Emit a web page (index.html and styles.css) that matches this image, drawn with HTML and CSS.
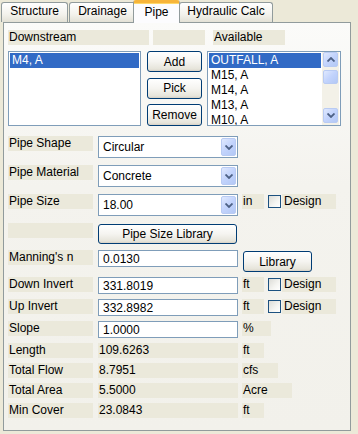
FILE: index.html
```html
<!DOCTYPE html>
<html lang="en">

<head>
    <meta charset="UTF-8" />
    <meta name="viewport" content="width=device-width, initial-scale=1.0" />
    <title>Pipe</title>
    <link rel="stylesheet" href="styles.css">
</head>

<body>
    <!-- tab strip -->
    <div class="tabs">
        <div class="tab t-structure">Structure</div>
        <div class="tab t-drainage">Drainage</div>
        <div class="tab active t-pipe">Pipe</div>
        <div class="tab t-hydraulic">Hydraulic Calc</div>
    </div>

    <div class="panel">
        <!-- downstream / available pickers -->
        <div class="heads">
            <span class="lbl head-down">Downstream</span>
            <span class="lbl head-blank"></span>
            <span class="lbl head-avail">Available</span>
        </div>
        <div class="lists">
            <div class="listbox list-down">
                <div class="item sel">M4, A</div>
            </div>
            <div class="btn-col">
                <button class="btn">Add</button>
                <button class="btn">Pick</button>
                <button class="btn">Remove</button>
            </div>
            <div class="listbox list-avail">
                <div class="items">
                    <div class="item sel">OUTFALL, A</div>
                    <div class="item">M15, A</div>
                    <div class="item">M14, A</div>
                    <div class="item">M13, A</div>
                    <div class="item">M10, A</div>
                </div>
                <div class="scrollbar">
                    <span class="sb-btn">
                        <svg width="8" height="5" viewBox="0 0 8 5"><polyline points="0.5,4.5 4,1 7.5,4.5" fill="none" stroke="#4d6185" stroke-width="1.8"/></svg>
                    </span>
                    <span class="sb-thumb"></span>
                    <span class="sb-btn sb-down">
                        <svg width="8" height="5" viewBox="0 0 8 5"><polyline points="0.5,0.5 4,4 7.5,0.5" fill="none" stroke="#4d6185" stroke-width="1.8"/></svg>
                    </span>
                </div>
            </div>
        </div>

        <!-- pipe properties -->
        <div class="row h29 first">
            <span class="lbl name">Pipe Shape</span>
            <div class="combo"><span class="combo-text">Circular</span>
                <span class="combo-btn"><svg width="8" height="5" viewBox="0 0 8 5"><polyline points="0.5,0.5 4,4 7.5,0.5" fill="none" stroke="#4d6185" stroke-width="1.8"/></svg></span>
            </div>
        </div>
        <div class="row h29">
            <span class="lbl name">Pipe Material</span>
            <div class="combo"><span class="combo-text">Concrete</span>
                <span class="combo-btn"><svg width="8" height="5" viewBox="0 0 8 5"><polyline points="0.5,0.5 4,4 7.5,0.5" fill="none" stroke="#4d6185" stroke-width="1.8"/></svg></span>
            </div>
        </div>
        <div class="row h29">
            <span class="lbl name">Pipe Size</span>
            <div class="combo"><span class="combo-text">18.00</span>
                <span class="combo-btn"><svg width="8" height="5" viewBox="0 0 8 5"><polyline points="0.5,0.5 4,4 7.5,0.5" fill="none" stroke="#4d6185" stroke-width="1.8"/></svg></span>
            </div>
            <span class="lbl unit">in</span>
            <span class="check"></span>
            <span class="lbl design">Design</span>
        </div>
        <div class="row h27">
            <span class="lbl name"></span>
            <button class="btn size-lib">Pipe Size Library</button>
        </div>
        <div class="row h27">
            <span class="lbl name">Manning's n</span>
            <span class="input">0.0130</span>
            <button class="btn lib">Library</button>
        </div>
        <div class="row h22">
            <span class="lbl name">Down Invert</span>
            <span class="input">331.8019</span>
            <span class="lbl unit">ft</span>
            <span class="check"></span>
            <span class="lbl design">Design</span>
        </div>
        <div class="row h22">
            <span class="lbl name">Up Invert</span>
            <span class="input">332.8982</span>
            <span class="lbl unit">ft</span>
            <span class="check"></span>
            <span class="lbl design">Design</span>
        </div>
        <div class="row h22">
            <span class="lbl name">Slope</span>
            <span class="input">1.0000</span>
            <span class="lbl unit pct">%</span>
        </div>
        <div class="row h20">
            <span class="lbl name">Length</span>
            <span class="lbl value">109.6263</span>
            <span class="lbl unit">ft</span>
        </div>
        <div class="row h20">
            <span class="lbl name">Total Flow</span>
            <span class="lbl value">8.7951</span>
            <span class="lbl unit cfs">cfs</span>
        </div>
        <div class="row h20">
            <span class="lbl name">Total Area</span>
            <span class="lbl value">5.5000</span>
            <span class="lbl unit acre">Acre</span>
        </div>
        <div class="row h20">
            <span class="lbl name">Min Cover</span>
            <span class="lbl value">23.0843</span>
            <span class="lbl unit">ft</span>
        </div>
    </div>
</body>

</html>
```

FILE: styles.css
```css
* {
    margin: 0;
    padding: 0;
    box-sizing: border-box;
}

body {
    background: #ece9d8;
    font: 12px "Liberation Sans", Arial, sans-serif;
    color: #000;
}

/* tabs */
.tabs {
    display: flex;
    align-items: flex-end;
    height: 22px;
}

.tab {
    height: 20px;
    padding-top: 1px;
    line-height: 15px;
    text-align: center;
    border: 1px solid #919b9c;
    border-bottom: none;
    border-radius: 3px 3px 0 0;
    background: linear-gradient(#ffffff, #f3f2ec 60%, #e3e1d6);
}

.t-structure {
    margin-left: 1px;
    width: 67px;
}

.t-drainage {
    margin-left: 1px;
    width: 67px;
}

.t-pipe {
    margin-left: -3px;
    width: 47px;
}

.t-hydraulic {
    margin-left: -1px;
    width: 94px;
}

.tab.active {
    position: relative;
    z-index: 1;
    height: 23px;
    margin-bottom: -1px;
    padding-top: 2px;
    background: #fcfcfe;
    border-top: 3px solid #ffc83c;
    box-shadow: inset 0 1px 0 #ffd86a;
    border-radius: 3px 3px 0 0;
    border-top-color: #f7b53a;
}

/* panel */
.panel {
    margin-left: 3px;
    width: 348px;
    height: 409px;
    border: 1px solid #919b9c;
    background: linear-gradient(#fbfbf9, #f4f3ee 40%, #f2f1eb);
    padding: 7px 0 0 4px;
}

.lbl {
    display: block;
    height: 15px;
    line-height: 15px;
    padding-left: 1px;
    background: #ebe9db;
    white-space: nowrap;
}

.heads {
    display: flex;
}

.head-down {
    width: 141px;
}

.head-blank {
    margin-left: 4px;
    width: 52px;
}

.head-avail {
    margin-left: 8px;
    width: 72px;
}

.lists {
    display: flex;
    margin-top: 6px;
    height: 75px;
}

.listbox {
    height: 75px;
    border: 1px solid #7f9db9;
    background: #fff;
}

.list-down {
    width: 133px;
    padding: 1px;
}

.item {
    height: 15px;
    line-height: 15px;
    padding-left: 2px;
    white-space: nowrap;
    overflow: hidden;
}

.item.sel {
    background: #316ac5;
    color: #fff;
}

.list-avail {
    margin-left: 5px;
    width: 134px;
    display: flex;
    overflow: hidden;
}

.items {
    width: 114px;
    padding: 1px;
}

.scrollbar {
    width: 17px;
    height: 73px;
    background: #f3f1e8;
    display: flex;
    flex-direction: column;
    align-items: center;
}

.sb-btn,
.sb-thumb,
.combo-btn {
    display: flex;
    align-items: center;
    justify-content: center;
    border: 1px solid #b9cbf3;
    border-radius: 2px;
    background: linear-gradient(135deg, #e0e9fe, #c2d3fc 50%, #b3c8f5);
}

.sb-btn {
    width: 15px;
    height: 15px;
}

.sb-thumb {
    margin-top: 3px;
    width: 15px;
    height: 14px;
}

.sb-down {
    margin-top: auto;
    margin-bottom: 2px;
}

/* buttons */
.btn-col {
    margin-left: 6px;
    width: 55px;
    display: flex;
    flex-direction: column;
    justify-content: space-between;
    height: 75px;
}

.btn {
    display: block;
    height: 21px;
    font: 12px "Liberation Sans", Arial, sans-serif;
    color: #000;
    border: 1px solid #003c74;
    border-radius: 3px;
    background: linear-gradient(#ffffff, #f5f4f0 50%, #e6e4da 90%, #d6d0c5);
}

.btn-col .btn {
    width: 55px;
}

.btn-col .btn:last-child {
    height: 22px;
}

/* rows */
.row {
    display: flex;
    align-items: flex-start;
}

.row.first {
    margin-top: 10px;
}

.h29 {
    height: 29px;
}

.h27 {
    height: 27px;
}

.h22 {
    height: 22px;
}

.h20 {
    height: 20px;
}

.name {
    width: 85px;
}

.combo {
    margin-left: 5px;
    width: 140px;
    height: 22px;
    border: 1px solid #7f9db9;
    background: #fff;
    display: flex;
    padding: 1px;
}

.combo-text {
    flex: 1;
    line-height: 18px;
    padding-left: 3px;
}

.combo-btn {
    width: 15px;
    height: 18px;
    padding-top: 1px;
}

.input {
    display: block;
    margin-left: 5px;
    width: 140px;
    height: 17px;
    line-height: 15px;
    padding: 1px 0 0 4px;
    border: 1px solid #7f9db9;
    background: #fff;
}

.value {
    margin-left: 5px;
    width: 140px;
}

.unit {
    margin-left: 4px;
    width: 22px;
}

.unit.pct {
    width: 29px;
}

.unit.cfs {
    width: 36px;
}

.unit.acre {
    width: 50px;
}

.check {
    display: block;
    margin: 1px 0 0 4px;
    width: 13px;
    height: 13px;
    border: 1px solid #1c5180;
    background: linear-gradient(135deg, #dcdcd7, #f5f5f2 60%, #ffffff);
}

.design {
    margin-left: 1px;
    width: 54px;
    padding-left: 2px;
}

.size-lib {
    margin: 1px 0 0 5px;
    width: 139px;
    height: 20px;
}

.lib {
    margin: 1px 0 0 5px;
    width: 69px;
}
```
